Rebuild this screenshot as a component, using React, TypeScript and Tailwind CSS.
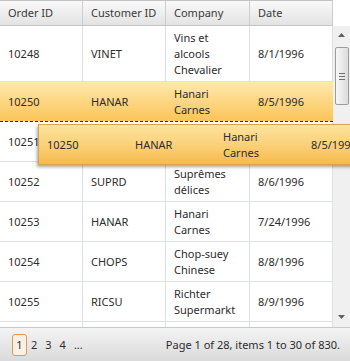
import type { ReactNode } from 'react'

type Order = { id: string; customer: string; company: string[]; date: string; h: string }

const orders: Order[] = [
  { id: '10248', customer: 'VINET', company: ['Vins et', 'alcools', 'Chevalier'], date: '8/1/1996', h: 'h-[56px]' },
  { id: '10250', customer: 'HANAR', company: ['Hanari', 'Carnes'], date: '8/5/1996', h: 'h-[40px]' },
  { id: '10251', customer: 'VICTE', company: ['Victuailles en', 'stock'], date: '8/8/1996', h: 'h-[40px]' },
  { id: '10252', customer: 'SUPRD', company: ['Suprêmes', 'délices'], date: '8/6/1996', h: 'h-[40px]' },
  { id: '10253', customer: 'HANAR', company: ['Hanari', 'Carnes'], date: '7/24/1996', h: 'h-[40px]' },
  { id: '10254', customer: 'CHOPS', company: ['Chop-suey', 'Chinese'], date: '8/8/1996', h: 'h-[40px]' },
  { id: '10255', customer: 'RICSU', company: ['Richter', 'Supermarkt'], date: '8/9/1996', h: 'h-[40px]' },
  // next row only peeks in under the pager, its text is out of view
  { id: '', customer: '', company: [], date: '', h: 'h-[40px]' },
]

const widths = ['w-[83px]', 'w-[83px]', 'w-[84px]', 'w-[83px]']

function Cell({ w, children, line = true }: { w: string; children: ReactNode; line?: boolean }) {
  return (
    <div className={`${w} shrink-0 flex items-center px-2 overflow-hidden whitespace-nowrap ${line ? 'border-r border-[#dde1e6]' : ''}`}>
      <div>{children}</div>
    </div>
  )
}

function Lines({ lines }: { lines: string[] }) {
  return (
    <>
      {lines.map((l) => (
        <div key={l}>{l}</div>
      ))}
    </>
  )
}

function Row({ o }: { o: Order }) {
  const selected = o.id === '10250'
  const cls = selected
    ? 'bg-gradient-to-b from-[#fee9ae] via-[#fdd682] to-[#fbc458] border-b border-dashed border-[#3c3020]'
    : 'bg-white border-b border-[#dde1e6]'
  return (
    <div className={`${o.h} ${cls} flex shrink-0`}>
      <Cell w={widths[0]} line={!selected}>{o.id}</Cell>
      <Cell w={widths[1]} line={!selected}>{o.customer}</Cell>
      <Cell w={widths[2]} line={!selected}><Lines lines={o.company} /></Cell>
      <Cell w={widths[3]} line={!selected}>{o.date}</Cell>
    </div>
  )
}

function ScrollBar() {
  return (
    <div className="w-[17px] shrink-0 bg-[#f0f0f0] flex flex-col items-center">
      <div className="h-[17px] flex items-center justify-center">
        <svg width="7" height="4" viewBox="0 0 7 4"><path d="M0 4 L3.5 0 L7 4 Z" fill="#606060" /></svg>
      </div>
      <div className="mt-[4px] w-[14px] h-[58px] rounded-[2px] border border-[#9c9c9c] bg-gradient-to-r from-[#f7f7f7] to-[#dcdcdc] flex flex-col items-center justify-center gap-[2px]">
        <div className="w-[6px] h-px bg-[#707070]" />
        <div className="w-[6px] h-px bg-[#707070]" />
        <div className="w-[6px] h-px bg-[#707070]" />
      </div>
      <div className="flex-1" />
      <div className="h-[17px] flex items-center justify-center mb-[2px]">
        <svg width="7" height="4" viewBox="0 0 7 4"><path d="M0 0 L3.5 4 L7 0 Z" fill="#606060" /></svg>
      </div>
    </div>
  )
}

export default function App() {
  const heads = ['Order ID', 'Customer ID', 'Company', 'Date']
  return (
    <div className="relative w-[350px] h-[361px] overflow-hidden bg-white text-[11px] leading-4 text-[#2d2d2d] flex flex-col" style={{ fontFamily: '"Segoe UI", "Noto Sans", sans-serif' }}>
      <div className="h-[26px] flex shrink-0">
        <div className="flex w-[333px] border-t border-b border-[#c2c2c2] bg-gradient-to-b from-[#f9f9f9] to-[#e3e3e3] text-[#3a3a3a]">
          {heads.map((h, i) => (
            <div key={h} className={`${widths[i]} shrink-0 flex items-center px-2 whitespace-nowrap border-r border-[#cdcdcd]`}>{h}</div>
          ))}
        </div>
        <div className="flex-1 bg-white" />
      </div>

      <div className="flex flex-1 min-h-0">
        <div className="w-[333px] flex flex-col overflow-hidden">
          {orders.map((o, i) => (
            <Row key={i} o={o} />
          ))}
        </div>
        <ScrollBar />
      </div>

      <div className="h-[34px] shrink-0 border-t border-[#c8c8c8] bg-gradient-to-b from-[#f4f4f4] to-[#dadada] flex items-center pl-3 pr-[10px] whitespace-nowrap">
        <div className="flex items-center">
          <span className="w-[15px] h-[22px] rounded-[3px] border border-[#e0955a] bg-[#faf1e6] flex items-center justify-center">1</span>
          <span className="px-1">2</span>
          <span className="px-1">3</span>
          <span className="px-1">4</span>
          <span className="px-1">...</span>
        </div>
        <div className="ml-auto">Page 1 of 28, items 1 to 30 of 830.</div>
      </div>

      <div className="absolute left-[38px] top-[124px] w-[352px] h-[41px] flex border border-[#d8a451] bg-gradient-to-b from-[#fde39c] via-[#fbd17a] to-[#f7ba4c] shadow-[-1px_2px_3px_rgba(0,0,0,0.35)] whitespace-nowrap">
        <div className="w-[88px] shrink-0 flex items-center px-2">10250</div>
        <div className="w-[88px] shrink-0 flex items-center px-2">HANAR</div>
        <div className="w-[88px] shrink-0 flex items-center px-2"><div><div>Hanari</div><div>Carnes</div></div></div>
        <div className="w-[88px] shrink-0 flex items-center px-2">8/5/1996</div>
      </div>
    </div>
  )
}
